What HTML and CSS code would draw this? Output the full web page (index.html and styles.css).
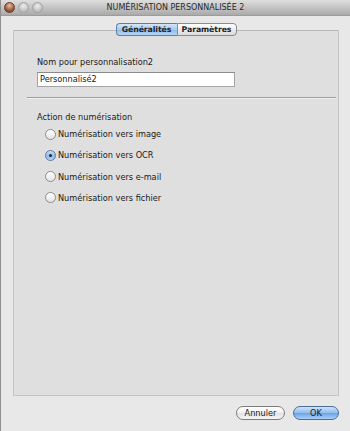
FILE: index.html
```html
<!DOCTYPE html>
<html>
<head>
	<title>NUMÉRISATION PERSONNALISÉE 2</title>
	<link rel="stylesheet" href="styles.css">
</head>
<body>

<div class="window">
	<div class="titlebar">
		<div class="lights">
			<span class="light close"></span>
			<span class="light"></span>
			<span class="light"></span>
		</div>
		<div class="title">NUMÉRISATION PERSONNALISÉE 2</div>
		<div></div>
	</div>

	<div class="content">
		<div class="panel">
			<div class="tabs">
				<span class="tab selected">Généralités</span>
				<span class="tab">Paramètres</span>
			</div>

			<p class="label first">Nom pour personnalisation2</p>
			<div class="field">Personnalisé2</div>

			<div class="separator"></div>

			<p class="label">Action de numérisation</p>
			<div class="radios">
				<div class="radio-row"><span class="radio"></span>Numérisation vers image</div>
				<div class="radio-row"><span class="radio checked"></span>Numérisation vers OCR</div>
				<div class="radio-row"><span class="radio"></span>Numérisation vers e-mail</div>
				<div class="radio-row"><span class="radio"></span>Numérisation vers fichier</div>
			</div>
		</div>

		<div class="buttons">
			<span class="btn">Annuler</span>
			<span class="btn default">OK</span>
		</div>
	</div>
</div>

</body>
</html>
```

FILE: styles.css
```css
body{ margin: 0; padding: 0; font-family: "DejaVu Sans", sans-serif; font-size: 8.2px; color: #1a1a1a; }
.window{ width: 350px; height: 431px; background-color: #e8e8e8; border-left: 1px solid #8e8e8e; box-sizing: border-box; overflow: hidden; }

.titlebar{ height: 16px; display: grid; grid-template-columns: 1fr auto 1fr; align-items: center;
	background: linear-gradient(#dedede, #aaaaaa); border-bottom: 1px solid #9c9c9c; box-sizing: border-box; }
.lights{ display: flex; gap: 3px; padding-left: 3px; }
.light{ width: 11px; height: 11px; border-radius: 50%; box-sizing: border-box;
	background: radial-gradient(circle at 50% 35%, #eeeeee, #bdbdbd 70%); border: 1px solid #a2a2a2; }
.light.close{ background: radial-gradient(circle at 50% 30%, #e8c0a8, #9a5a3a 60%, #6e3a22); border-color: #6a3a26; }
.title{ font-size: 8px; color: #2a2a2a; letter-spacing: 0; }

.content{ padding: 14px 11px 0 12px; }
.panel{ height: 366px; box-sizing: border-box; background-color: #dfdfdf; border: 1px solid #c4c4c4;
	border-top-color: #b8b8b8; padding: 0 2px 0 23px; }

.tabs{ display: flex; justify-content: center; margin: -8px 0 0 -21px; }
.tab{ height: 13px; box-sizing: border-box; line-height: 11px; text-align: center; font-size: 7.8px; font-weight: bold;
	letter-spacing: -0.1px; color: #222222; background: linear-gradient(#ffffff, #ececec 50%, #dcdcdc); border: 1px solid #8a8a8a; }
.tab:first-child{ width: 61px; border-radius: 4px 0 0 4px; border-right: none; }
.tab:last-child{ width: 60px; border-radius: 0 4px 4px 0; }
.tab.selected{ background: linear-gradient(#d4e6fa, #a7caf0 50%, #8cb8ea 51%, #b5d6f8); border-color: #5d7fa8; }

.label{ margin: 0; line-height: 10px; }
.label.first{ margin-top: 21px; }
.field{ margin-top: 5px; width: 198px; height: 15px; box-sizing: border-box; background-color: #ffffff;
	border: 1px solid #a4a4a4; border-top-color: #8a8a8a; line-height: 13px; padding-left: 2px; }

.separator{ margin: 10px 0 13px -10px; border-top: 1px solid #9e9e9e; border-bottom: 1px solid #f0f0f0; }

.radios{ margin-top: 7px; padding-left: 8px; display: flex; flex-direction: column; gap: 11.3px; }
.radio-row{ display: flex; align-items: center; line-height: 10px; height: 10px; }
.radio{ width: 11px; height: 11px; border-radius: 50%; box-sizing: border-box; margin-right: 2px;
	background: linear-gradient(#ffffff, #e4e4e4); border: 1px solid #8c8c8c; position: relative; }
.radio.checked{ background: linear-gradient(#cfe3f8, #8fb9e6 55%, #b7d5f5); border-color: #5a7aa2; }
.radio.checked::after{ content: ""; position: absolute; left: 3px; top: 3px; width: 3px; height: 3px;
	border-radius: 50%; background-color: #1e2a3a; }

.buttons{ display: flex; justify-content: flex-end; gap: 8px; margin-top: 10px; }
.btn{ height: 14px; box-sizing: border-box; border-radius: 7px; border: 1px solid #7c7c7c; line-height: 12px;
	text-align: center; background: linear-gradient(#ffffff, #f0f0f0 50%, #e0e0e0 51%, #f6f6f6); }
.btn:first-child{ width: 49px; }
.btn.default{ width: 46px; background: linear-gradient(#cfe3fa, #8fbbec 50%, #6aa3e4 51%, #a9d0fa); border-color: #4a6d9c; }
```
